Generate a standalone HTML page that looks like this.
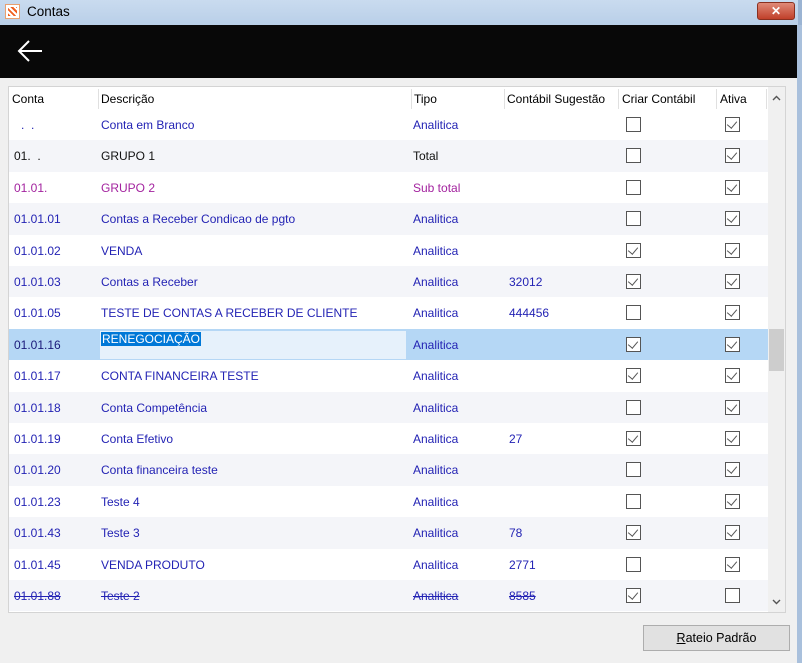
<!DOCTYPE html>
<html><head><meta charset="utf-8"><style>
*{margin:0;padding:0;box-sizing:border-box}
body{width:802px;height:663px;overflow:hidden;background:#f0f0f0;font-family:"Liberation Sans",sans-serif;font-size:12px;position:relative}
.title{position:absolute;left:0;top:0;width:802px;height:25px;background:linear-gradient(#c9dbef,#b9cfe8);border-right:4px solid #9bb4d3}
.title span{position:absolute;left:27px;top:4px;font-size:13.5px;color:#000}
.ico{position:absolute;left:5px;top:4px;width:15px;height:15px;background:#fff;border:1px solid #e8a070}
.ico:after{content:"";position:absolute;left:2px;top:2px;width:9px;height:9px;background:repeating-linear-gradient(45deg,#f06020 0 2px,#fff 2px 4px)}
.close{position:absolute;left:757px;top:2px;width:38px;height:18px;border-radius:3px;background:linear-gradient(#e08a78,#c0402a);border:1px solid #8a3020;color:#fff;font-weight:bold;text-align:center;font-size:12px;line-height:16px}
.bar{position:absolute;left:0;top:25px;width:798px;height:53px;background:#080808}
.rb{position:absolute;left:797px;top:25px;width:5px;height:638px;background:#a9c0dc}
.grid{position:absolute;left:8px;top:86px;width:778px;height:527px;background:#fff;border:1px solid #d4d4d4}
.hd{position:absolute;top:0;height:23px;line-height:24px;color:#000;font-size:12px}
.hsep{position:absolute;top:2px;width:1px;height:20px;background:#e0e0e0}
.row{position:absolute;left:0;width:759px;height:31.4px}
.row.alt{background:#f4f5f9}
.row span{position:absolute;top:9px;white-space:nowrap}
.b{color:#2323b4}.p{color:#a3239f}.k{color:#111}
.s span{text-decoration:line-through}
.cb{position:absolute;top:8px;width:15px;height:15px;border:1px solid #555;background:#fff}
.cb.c:after{content:"";position:absolute;left:3px;top:1px;width:5px;height:8px;border-right:1.5px solid #555;border-bottom:1.5px solid #555;transform:rotate(40deg)}
.sb{position:absolute;left:759px;top:0;width:17px;height:525px;background:#f0f0f0}
.thumb{position:absolute;left:1px;top:242px;width:15px;height:42px;background:#cdcdcd}
.btn{position:absolute;left:643px;top:625px;width:147px;height:26px;background:#e1e1e1;border:1px solid #adadad;text-align:center;line-height:24px;font-size:12.5px}
</style></head><body>
<div class="title"><div class="ico"></div><span>Contas</span><div class="close">✕</div></div>
<div class="bar"><svg style="position:absolute;left:16px;top:14px" width="28" height="24"><path d="M3 12H26M13 2L3 12L13 22" stroke="#fff" stroke-width="2" fill="none"/></svg></div>
<div class="rb"></div>
<div class="grid">
<div class="hd" style="left:3px">Conta</div><div class="hsep" style="left:89px"></div>
<div class="hd" style="left:92px">Descrição</div><div class="hsep" style="left:402px"></div>
<div class="hd" style="left:405px">Tipo</div><div class="hsep" style="left:495px"></div>
<div class="hd" style="left:498px">Contábil Sugestão</div><div class="hsep" style="left:609px"></div>
<div class="hd" style="left:613px">Criar Contábil</div><div class="hsep" style="left:707px"></div>
<div class="hd" style="left:711px">Ativa</div><div class="hsep" style="left:757px"></div>

<div class="row b" style="top:22px"><span style="left:12px">.&nbsp;&nbsp;.</span><span style="left:92px">Conta em Branco</span><span style="left:404px">Analitica</span><div class="cb" style="left:617px"></div><div class="cb c" style="left:716px"></div></div>
<div class="row alt k" style="top:53.4px"><span style="left:5px">01.&nbsp;&nbsp;.</span><span style="left:92px">GRUPO 1</span><span style="left:404px">Total</span><div class="cb" style="left:617px"></div><div class="cb c" style="left:716px"></div></div>
<div class="row p" style="top:84.8px"><span style="left:5px">01.01.</span><span style="left:92px">GRUPO 2</span><span style="left:404px">Sub total</span><div class="cb" style="left:617px"></div><div class="cb c" style="left:716px"></div></div>
<div class="row alt b" style="top:116.2px"><span style="left:5px">01.01.01</span><span style="left:92px">Contas a Receber Condicao de pgto</span><span style="left:404px">Analitica</span><div class="cb" style="left:617px"></div><div class="cb c" style="left:716px"></div></div>
<div class="row b" style="top:147.6px"><span style="left:5px">01.01.02</span><span style="left:92px">VENDA</span><span style="left:404px">Analitica</span><div class="cb c" style="left:617px"></div><div class="cb c" style="left:716px"></div></div>
<div class="row alt b" style="top:179px"><span style="left:5px">01.01.03</span><span style="left:92px">Contas a Receber</span><span style="left:404px">Analitica</span><span style="left:500px">32012</span><div class="cb c" style="left:617px"></div><div class="cb c" style="left:716px"></div></div>
<div class="row b" style="top:210.4px"><span style="left:5px">01.01.05</span><span style="left:92px">TESTE DE CONTAS A RECEBER DE CLIENTE</span><span style="left:404px">Analitica</span><span style="left:500px">444456</span><div class="cb" style="left:617px"></div><div class="cb c" style="left:716px"></div></div>
<div class="row" style="top:241.8px;background:#b5d7f5;color:#1a1a7a"><div style="position:absolute;left:91px;top:2px;width:306px;height:28px;background:#e6f1fb"></div><span style="left:5px">01.01.16</span><span style="left:92px;top:3px;background:#0078d7;color:#fff;padding:0 1px">RENEGOCIAÇÃO</span><span style="left:404px;color:#2323b4">Analitica</span><div class="cb c" style="left:617px"></div><div class="cb c" style="left:716px"></div></div>
<div class="row b" style="top:273.2px"><span style="left:5px">01.01.17</span><span style="left:92px">CONTA FINANCEIRA TESTE</span><span style="left:404px">Analitica</span><div class="cb c" style="left:617px"></div><div class="cb c" style="left:716px"></div></div>
<div class="row alt b" style="top:304.6px"><span style="left:5px">01.01.18</span><span style="left:92px">Conta Competência</span><span style="left:404px">Analitica</span><div class="cb" style="left:617px"></div><div class="cb c" style="left:716px"></div></div>
<div class="row b" style="top:336px"><span style="left:5px">01.01.19</span><span style="left:92px">Conta Efetivo</span><span style="left:404px">Analitica</span><span style="left:500px">27</span><div class="cb c" style="left:617px"></div><div class="cb c" style="left:716px"></div></div>
<div class="row alt b" style="top:367.4px"><span style="left:5px">01.01.20</span><span style="left:92px">Conta financeira teste</span><span style="left:404px">Analitica</span><div class="cb" style="left:617px"></div><div class="cb c" style="left:716px"></div></div>
<div class="row b" style="top:398.8px"><span style="left:5px">01.01.23</span><span style="left:92px">Teste 4</span><span style="left:404px">Analitica</span><div class="cb" style="left:617px"></div><div class="cb c" style="left:716px"></div></div>
<div class="row alt b" style="top:430.2px"><span style="left:5px">01.01.43</span><span style="left:92px">Teste 3</span><span style="left:404px">Analitica</span><span style="left:500px">78</span><div class="cb c" style="left:617px"></div><div class="cb c" style="left:716px"></div></div>
<div class="row b" style="top:461.6px"><span style="left:5px">01.01.45</span><span style="left:92px">VENDA PRODUTO</span><span style="left:404px">Analitica</span><span style="left:500px">2771</span><div class="cb" style="left:617px"></div><div class="cb c" style="left:716px"></div></div>
<div class="row alt b s" style="top:493px"><span style="left:5px">01.01.88</span><span style="left:92px">Teste 2</span><span style="left:404px">Analitica</span><span style="left:500px">8585</span><div class="cb c" style="left:617px"></div><div class="cb" style="left:716px"></div></div>

<div class="sb"><svg style="position:absolute;left:4px;top:8px" width="9" height="6"><path d="M1 5L4.5 1.5L8 5" stroke="#555" stroke-width="1.4" fill="none"/></svg><div class="thumb"></div><svg style="position:absolute;left:4px;top:512px" width="9" height="6"><path d="M1 1L4.5 4.5L8 1" stroke="#555" stroke-width="1.4" fill="none"/></svg></div>
</div>
<div class="btn"><u>R</u>ateio Padrão</div>
</body></html>
